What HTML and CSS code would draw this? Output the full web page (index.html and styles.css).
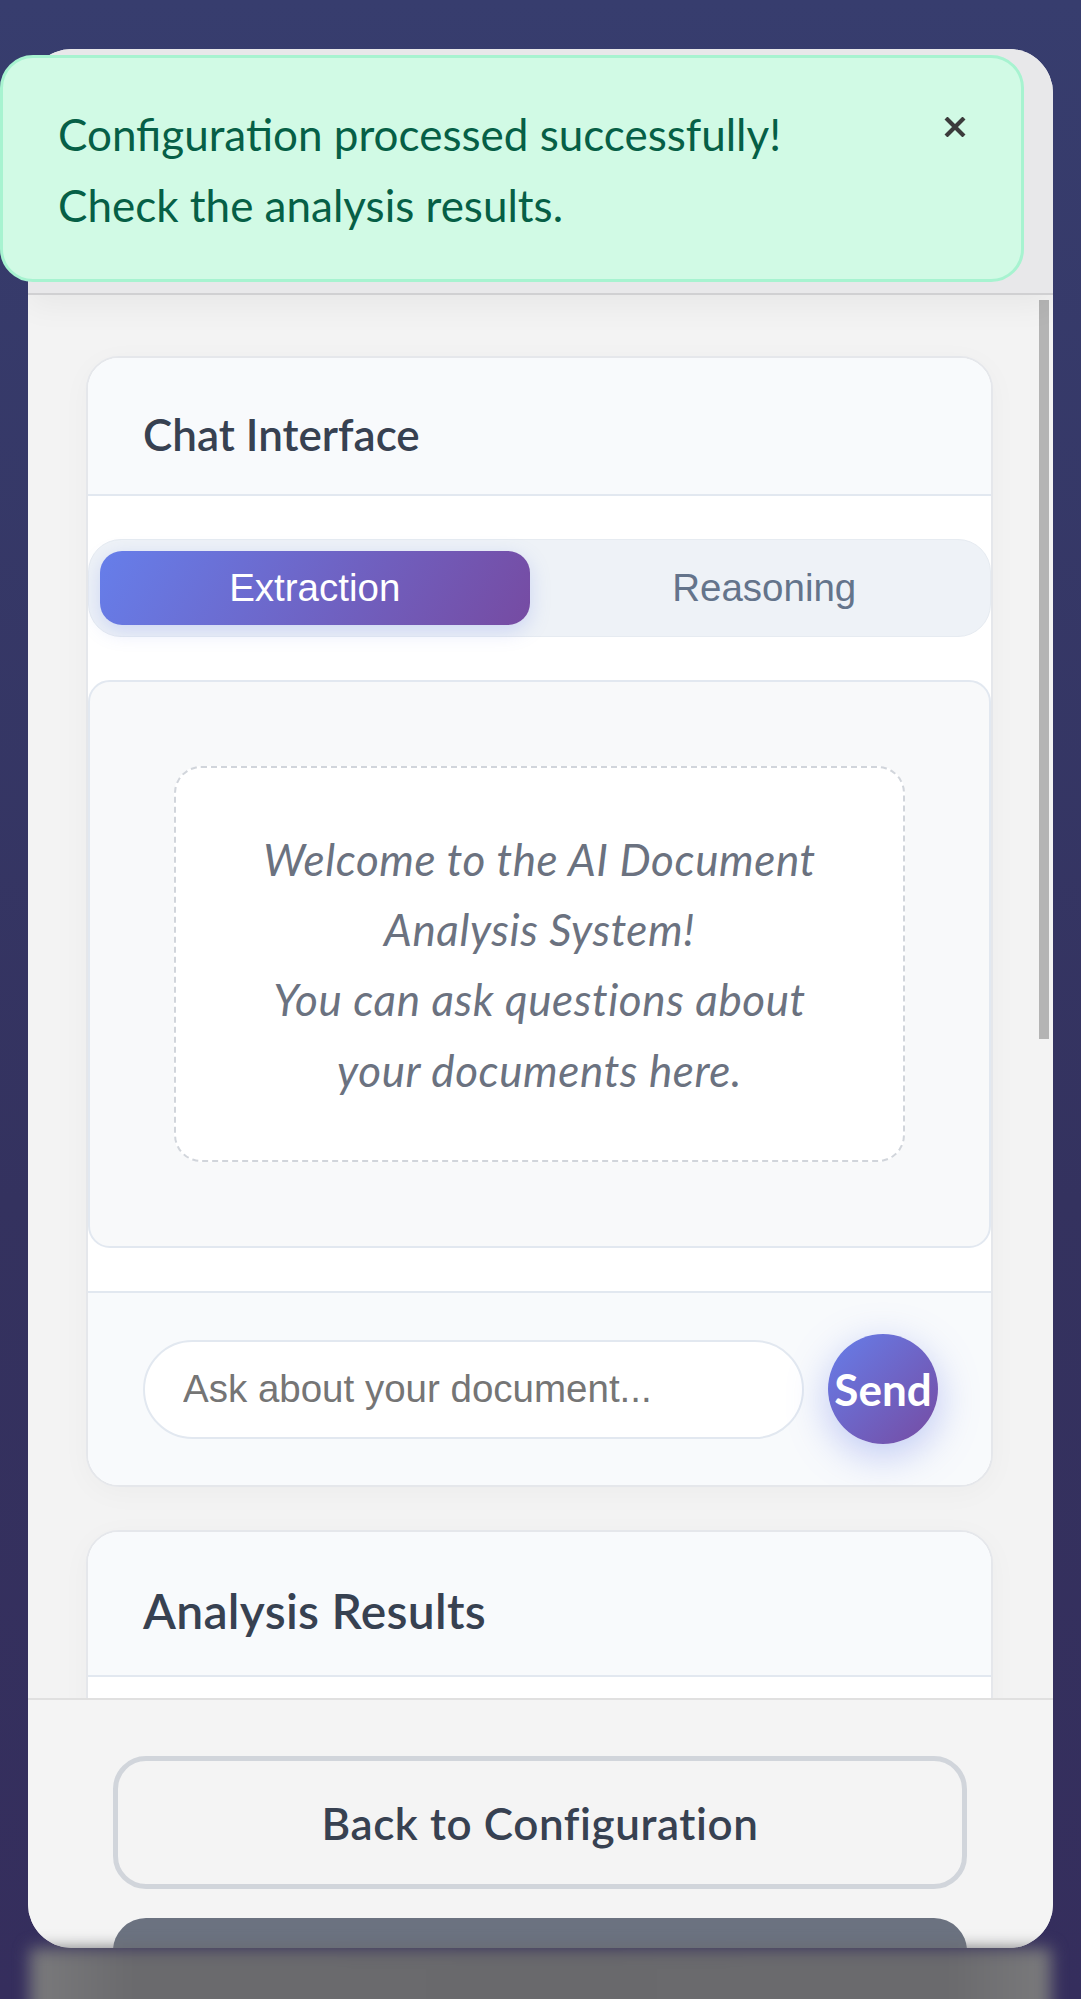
FILE: index.html
```html
<!DOCTYPE html>
<html lang="en">
<head>
<meta charset="utf-8">
<title>Document Analysis</title>
<link rel="stylesheet" href="styles.css">
</head>
<body>
<div class="stage">
  <div class="modal">
    <div class="modal-head"></div>
    <div class="modal-body">
      <div class="scroll">
        <section class="panel chat">
          <div class="panel-head"><h3 class="panel-title">Chat Interface</h3></div>
          <div class="chat-body">
            <div class="tabs">
              <button class="tab active">Extraction</button>
              <button class="tab">Reasoning</button>
            </div>
            <div class="messages">
              <div class="welcome">
                <p>Welcome to the AI Document<br>Analysis System!<br>You can ask questions about<br>your documents here.</p>
              </div>
            </div>
          </div>
          <div class="composer">
            <input class="ask" type="text" placeholder="Ask about your document...">
            <button class="send"><span>Send</span></button>
          </div>
        </section>
        <section class="panel results">
          <div class="panel-head"><h3 class="panel-title big">Analysis Results</h3></div>
          <div class="results-body"></div>
        </section>
      </div>
      <div class="scrollbar"><div class="thumb"></div></div>
    </div>
    <div class="modal-foot">
      <button class="btn-outline">Back to Configuration</button>
      <button class="btn-gray"></button>
    </div>
  </div>
  <div class="under"></div>
  <div class="toast">
    <p class="toast-text">Configuration processed successfully!<br>Check the analysis results.</p>
    <button class="toast-close" aria-label="Close">
      <svg viewBox="0 0 22 20" width="22" height="20"><path d="M2 1 L20 19 M20 1 L2 19" stroke="#3b3b3b" stroke-width="4.2" stroke-linecap="butt"/></svg>
    </button>
  </div>
</div>
</body>
</html>
```
FILE: styles.css
```css
* { box-sizing: border-box; }
html, body { margin: 0; padding: 0; }
body {
  width: 1081px;
  height: 1999px;
  overflow: hidden;
  background: linear-gradient(180deg, #373d6e 0%, #34325f 60%, #352e5d 100%);
  font-family: Lato, "Open Sans", sans-serif;
}
.stage {
  position: relative;
  padding: 49px 28px 0 28px;
}
.modal {
  width: 1025px;
  height: 1899px;
  border-radius: 44px;
  background: #f3f3f3;
  display: flex;
  flex-direction: column;
  overflow: hidden;
}
.modal-head {
  position: relative;
  z-index: 1;
  height: 246px;
  flex: none;
  background: #e8e8ea;
  border-bottom: 2px solid #d0d0d2;
  box-shadow: 0 10px 30px rgba(0,0,0,0.05);
}
.modal-body {
  flex: 1;
  display: flex;
  min-height: 0;
  overflow: hidden;
}
.scroll {
  flex: 1;
  overflow: hidden;
  padding: 61px 46px 0 58px;
  display: flex;
  flex-direction: column;
  gap: 43px;
}
.scrollbar {
  width: 10px;
  margin-right: 4px;
  flex: none;
  padding-top: 5px;
}
.thumb {
  height: 739px;
  background: #b4b4b4;
}
.panel {
  flex: none;
  background: #ffffff;
  border: 2px solid #e5e7eb;
  border-radius: 33px;
  overflow: hidden;
  box-shadow: 0 6px 30px rgba(0,0,0,0.03);
}
.panel-head {
  background: #f8fafc;
  border-bottom: 2px solid #e2e8f0;
  padding: 41px 55px 25px;
}
.panel-title {
  margin: 0;
  font-size: 44px;
  line-height: 70.4px;
  font-weight: 600;
  color: #374151;
}
.panel-title.big {
  font-size: 48px;
  line-height: 76.8px;
  letter-spacing: 0.3px;
}
.chat-body {
  padding: 43px 0;
}
.tabs {
  display: flex;
  gap: 20px;
  padding: 11px;
  background: #eef2f7;
  border: 1px solid #e6ebf1;
  border-radius: 33px;
  margin-bottom: 43px;
}
.tab {
  flex: 1;
  height: 74px;
  border: none;
  border-radius: 22px;
  background: transparent;
  font-family: "Liberation Sans", Arial, sans-serif;
  font-size: 38.5px;
  color: #64748b;
  padding: 0;
}
.tab.active {
  background: linear-gradient(120deg, #667eea 0%, #764ba2 100%);
  color: #ffffff;
  box-shadow: 0 6px 20px rgba(102,126,234,0.25);
}
.messages {
  height: 568px;
  border: 2px solid #e2e8f0;
  border-radius: 22px;
  background: #f8f9fa;
  padding: 84px;
  display: flex;
}
.welcome {
  flex: 1;
  border: 2px dashed #d1d5db;
  border-radius: 27px;
  background: #ffffff;
  display: flex;
  align-items: center;
  justify-content: center;
}
.welcome p {
  margin: 0;
  text-align: center;
  font-style: italic;
  font-size: 44px;
  line-height: 70.4px;
  letter-spacing: 0.6px;
  color: #6b7280;
  white-space: nowrap;
}
.composer {
  background: #f8fafc;
  border-top: 2px solid #e2e8f0;
  padding: 41px 53px 41px 55px;
  display: flex;
  align-items: center;
  gap: 24px;
}
.ask {
  flex: 1;
  min-width: 0;
  height: 99px;
  border: 2px solid #e2e8f0;
  border-radius: 50px;
  background: #ffffff;
  padding: 0 38px;
  font-family: "Liberation Sans", Arial, sans-serif;
  font-size: 38.5px;
  color: #333;
  outline: none;
}
.ask::placeholder { color: #757575; }
.send {
  flex: none;
  width: 110px;
  height: 110px;
  border-radius: 50%;
  border: none;
  padding: 0;
  background: linear-gradient(135deg, #667eea 0%, #764ba2 100%);
  box-shadow: 0 11px 40px rgba(102,126,234,0.4);
  display: flex;
  align-items: center;
  justify-content: center;
  overflow: visible;
}
.send span {
  font-family: Lato, sans-serif;
  font-weight: 700;
  font-size: 44px;
  color: #ffffff;
  white-space: nowrap;
}
.results-body {
  height: 300px;
  background: #ffffff;
}
.modal-foot {
  flex: none;
  height: 250px;
  background: #f4f4f4;
  border-top: 2px solid #e0e0e0;
  padding: 56px 86px 0 85px;
  display: flex;
  flex-direction: column;
  gap: 29px;
}
.btn-outline {
  flex: none;
  height: 133px;
  border: 5.5px solid #d1d5db;
  border-radius: 33px;
  background: transparent;
  font-family: Lato, sans-serif;
  font-weight: 600;
  font-size: 44px;
  letter-spacing: 0.6px;
  color: #374151;
}
.btn-gray {
  flex: none;
  height: 110px;
  border: none;
  border-radius: 33px;
  background: #6b7280;
}
.under {
  height: 80px;
  margin: 0 2px;
  background: linear-gradient(90deg, #7a7a7c 0%, #6a6a6d 10%, #69696c 50%, #6a6a6d 90%, #7a7a7c 100%);
  filter: blur(8px);
}
.toast {
  position: absolute;
  z-index: 5;
  top: 55px;
  left: 0;
  width: 1024px;
  height: 227px;
  background: #d1fae5;
  border: 3px solid #a7f3d0;
  border-radius: 33px;
  padding: 41px 55px;
  display: flex;
  align-items: flex-start;
  justify-content: space-between;
}
.toast-text {
  margin: 0;
  font-size: 44px;
  line-height: 71px;
  color: #065f46;
}
.toast-close {
  border: none;
  background: transparent;
  padding: 0;
  margin-top: 18px;
  width: 22px;
  height: 20px;
  display: block;
}
.toast-close svg { display: block; }
```
